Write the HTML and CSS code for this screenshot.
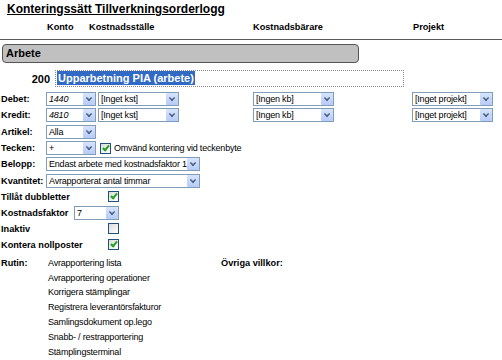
FILE: index.html
```html
<!DOCTYPE html>
<html>
<head>
  <title>Konteringssätt Tillverkningsorderlogg</title>
  <meta charset="utf-8">
  <link rel="stylesheet" href="styles.css">
</head>
<body>
  <h1 class="title">Konteringssätt Tillverkningsorderlogg</h1>

  <div class="colheads">
    <span class="ch-konto">Konto</span>
    <span class="ch-kst">Kostnadsställe</span>
    <span class="ch-kb">Kostnadsbärare</span>
    <span class="ch-proj">Projekt</span>
  </div>

  <div class="section">Arbete</div>

  <div class="name-row">
    <span class="code">200</span>
    <div class="name-input"><span class="selected">Upparbetning PIA (arbete)</span></div>
  </div>

  <div class="form">
    <div class="row">
      <label class="lbl">Debet:</label>
      <div class="sel w-konto"><span class="val it">1440</span><span class="btn"></span></div>
      <div class="sel w-kst"><span class="val">[Inget kst]</span><span class="btn"></span></div>
      <div class="sel w-kb"><span class="val">[Ingen kb]</span><span class="btn"></span></div>
      <div class="sel w-proj"><span class="val">[Inget projekt]</span><span class="btn"></span></div>
    </div>
    <div class="row">
      <label class="lbl">Kredit:</label>
      <div class="sel w-konto"><span class="val it">4810</span><span class="btn"></span></div>
      <div class="sel w-kst"><span class="val">[Inget kst]</span><span class="btn"></span></div>
      <div class="sel w-kb"><span class="val">[Ingen kb]</span><span class="btn"></span></div>
      <div class="sel w-proj"><span class="val">[Inget projekt]</span><span class="btn"></span></div>
    </div>
    <div class="row">
      <label class="lbl">Artikel:</label>
      <div class="sel w-konto"><span class="val">Alla</span><span class="btn"></span></div>
    </div>
    <div class="row">
      <label class="lbl">Tecken:</label>
      <div class="sel w-konto"><span class="val">+</span><span class="btn"></span></div>
      <span class="cb checked"></span>
      <span class="cb-text">Omvänd kontering vid teckenbyte</span>
    </div>
    <div class="row">
      <label class="lbl">Belopp:</label>
      <div class="sel w-wide"><span class="val">Endast arbete med kostnadsfaktor 1</span><span class="btn"></span></div>
    </div>
    <div class="row">
      <label class="lbl">Kvantitet:</label>
      <div class="sel w-wide"><span class="val">Avrapporterat antal timmar</span><span class="btn"></span></div>
    </div>
  </div>

  <div class="opts">
    <div class="opt">
      <label class="lbl-long">Tillåt dubbletter</label>
      <span class="cb checked"></span>
    </div>
    <div class="opt">
      <label class="lbl-kf">Kostnadsfaktor</label>
      <div class="sel w-kf"><span class="val">7</span><span class="btn"></span></div>
    </div>
    <div class="opt">
      <label class="lbl-long">Inaktiv</label>
      <span class="cb"></span>
    </div>
    <div class="opt">
      <label class="lbl-long">Kontera nollposter</label>
      <span class="cb checked"></span>
    </div>
  </div>

  <div class="rutin">
    <label class="lbl">Rutin:</label>
    <ul class="rutin-list">
      <li>Avrapportering lista</li>
      <li>Avrapportering operationer</li>
      <li>Korrigera stämplingar</li>
      <li>Registrera leverantörsfakturor</li>
      <li>Samlingsdokument op.lego</li>
      <li>Snabb- / restrapportering</li>
      <li>Stämplingsterminal</li>
    </ul>
    <label class="villkor">Övriga villkor:</label>
  </div>
</body>
</html>
```

FILE: styles.css
```css
body {
  margin: 0;
  font-family: "Liberation Sans", Arial, sans-serif;
  font-size: 9.2px;
  color: #000;
  background: #fff;
}

.title {
  margin: 2px 0 0 7px;
  font-size: 12px;
  font-weight: bold;
  text-decoration: underline;
  line-height: 14px;
}

.colheads {
  display: flex;
  margin-top: 5px;
  padding-bottom: 6px;
  border-bottom: 1px solid #5a5a5a;
  font-weight: bold;
  line-height: 12px;
}

.ch-konto {
  margin-left: 47px;
  width: 42px;
}

.ch-kst {
  width: 164px;
}

.ch-kb {
  width: 160px;
}

.section {
  width: 352px;
  height: 17px;
  margin: 4px 0 0 2px;
  padding-left: 3px;
  background: #c0c0c0;
  border: 1px solid #555;
  border-radius: 4px;
  font-size: 11px;
  font-weight: bold;
  line-height: 17px;
}

.name-row {
  display: flex;
  align-items: center;
  margin-top: 7px;
}

.code {
  width: 50px;
  text-align: right;
  font-size: 11px;
  font-weight: bold;
}

.name-input {
  width: 347px;
  height: 15px;
  margin-left: 5px;
  border: 1px dotted #888;
  font-size: 11px;
  font-weight: bold;
  line-height: 15px;
}

.selected {
  margin-left: 1px;
  padding: 1px 1px;
  background: #316ac5;
  color: #fff;
}

.form {
  margin-top: 4px;
}

.row {
  display: flex;
  align-items: center;
  height: 16.3px;
}

.lbl {
  width: 46px;
  padding-left: 1px;
  box-sizing: border-box;
  font-weight: bold;
}

.sel {
  display: flex;
  align-items: center;
  height: 14px;
  box-sizing: border-box;
  border: 1px solid #7f9db9;
  background: #fff;
  margin-right: 2px;
}

.val {
  flex: 1;
  padding-left: 2px;
  font-size: 9px;
  letter-spacing: -0.2px;
  white-space: nowrap;
  overflow: hidden;
}

.val.it {
  font-style: italic;
}

.btn {
  width: 12px;
  height: 12px;
  border-radius: 1px;
  background: linear-gradient(#d7e4fd, #b6cbf7);
  position: relative;
}

.btn::after {
  content: "";
  position: absolute;
  left: 3px;
  top: 2px;
  width: 4px;
  height: 4px;
  border-right: 2px solid #4d6185;
  border-bottom: 2px solid #4d6185;
  transform: rotate(45deg) scale(0.75);
}

.w-konto {
  width: 50px;
}

.w-kst {
  width: 81px;
  margin-right: 74px;
}

.w-kb {
  width: 81px;
  margin-right: 78px;
}

.w-proj {
  width: 81px;
}

.w-wide {
  width: 154px;
}

.w-kf {
  width: 45px;
}

.cb {
  display: inline-block;
  width: 11px;
  height: 11px;
  box-sizing: border-box;
  border: 1px solid #1c5180;
  background: linear-gradient(135deg, #dcdcd7, #fff);
  position: relative;
}

.cb.checked::after {
  content: "";
  position: absolute;
  left: 3px;
  top: 0px;
  width: 2px;
  height: 5px;
  border-right: 2px solid #21a121;
  border-bottom: 2px solid #21a121;
  transform: rotate(40deg);
}

.row .cb {
  margin-left: 2px;
}

.cb-text {
  margin-left: 3px;
  font-size: 9px;
  letter-spacing: -0.2px;
}

.opts {
  margin-top: 0;
}

.opt {
  display: flex;
  align-items: center;
  height: 16px;
}

.lbl-long {
  width: 108px;
  padding-left: 1px;
  box-sizing: border-box;
  font-weight: bold;
}

.lbl-kf {
  width: 74px;
  padding-left: 1px;
  box-sizing: border-box;
  font-weight: bold;
}

.rutin {
  display: flex;
  align-items: flex-start;
  margin-top: 4px;
}

.rutin-list {
  list-style: none;
  margin: 0 0 0 2px;
  padding: 0;
  width: 173px;
  font-size: 9px;
  letter-spacing: -0.2px;
}

.rutin-list li {
  height: 14.8px;
  line-height: 12px;
}

.rutin .lbl,
.villkor {
  line-height: 12px;
}

.villkor {
  font-weight: bold;
}
```
